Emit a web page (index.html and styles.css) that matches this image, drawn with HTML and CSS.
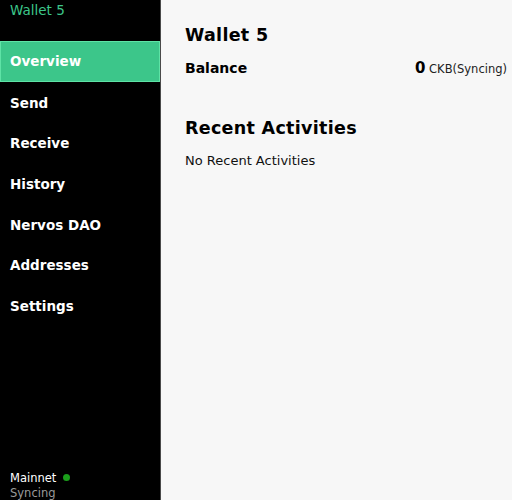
FILE: index.html
```html
<!DOCTYPE html>
<html lang="en">
<head>
  <meta charset="UTF-8">
  <title>Neuron – Wallet 5</title>
  <link rel="stylesheet" href="styles.css">
</head>
<body>
  <div class="app">
    <aside class="sidebar">
      <div class="wallet-name">Wallet 5</div>
      <nav class="nav">
        <div class="nav-item active">Overview</div>
        <div class="nav-item">Send</div>
        <div class="nav-item">Receive</div>
        <div class="nav-item">History</div>
        <div class="nav-item">Nervos DAO</div>
        <div class="nav-item">Addresses</div>
        <div class="nav-item">Settings</div>
      </nav>
      <div class="network">
        <div class="net-name">Mainnet <span class="dot"></span></div>
        <div class="net-status">Syncing</div>
      </div>
    </aside>

    <main class="main">
      <h1>Wallet 5</h1>
      <div class="balance">
        <span class="balance-label">Balance</span>
        <span class="balance-value"><b>0</b> CKB(Syncing)</span>
      </div>
      <h2>Recent Activities</h2>
      <p class="empty">No Recent Activities</p>
    </main>
  </div>
</body>
</html>
```

FILE: styles.css
```css
body {
  margin: 0;
  font-family: "DejaVu Sans", "Noto Sans", sans-serif;
  background: #f7f7f7;
}

.app {
  display: flex;
  height: 500px;
  overflow: hidden;
}

.sidebar {
  width: 160px;
  flex-shrink: 0;
  background: #000;
  border-right: 1px solid #4a4a4a;
  display: flex;
  flex-direction: column;
}

.wallet-name {
  color: #3cc68a;
  font-size: 13.5px;
  padding: 2px 10px 0;
  height: 39px;
  line-height: 17px;
}

.nav-item {
  height: 40.7px;
  line-height: 42px;
  padding: 0 10px;
  color: #fff;
  font-size: 13.5px;
  font-weight: 600;
  box-sizing: border-box;
}

.nav-item.active {
  background: #3cc68a;
  border: 1px solid #5ee3a6;
  padding-left: 9px;
  line-height: 38px;
}

.network {
  margin-top: auto;
  padding: 0 10px;
  font-size: 11.5px;
}

.net-name {
  color: #fff;
  line-height: 16px;
}

.dot {
  display: inline-block;
  width: 7px;
  height: 7px;
  border-radius: 50%;
  background: #1b9e1b;
  margin-left: 3px;
  vertical-align: 1px;
}

.net-status {
  color: #9a9a9a;
  line-height: 15px;
  margin-bottom: -1px;
}

.main {
  flex: 1;
  padding: 24px 5px 0 24px;
}

.main h1 {
  font-size: 17.5px;
  margin: 0 0 13px;
  line-height: 22px;
  letter-spacing: 0.3px;
}

.balance {
  display: flex;
  justify-content: space-between;
  align-items: baseline;
  font-size: 14px;
}

.balance-label {
  font-weight: bold;
}

.balance-value {
  font-size: 11.5px;
  color: #222;
}

.balance-value b {
  font-size: 15px;
  color: #000;
}

.main h2 {
  font-size: 17.5px;
  margin: 40px 0 14px;
  line-height: 22px;
  letter-spacing: 0.3px;
}

.empty {
  margin: 0;
  font-size: 13px;
  color: #111;
}
```
